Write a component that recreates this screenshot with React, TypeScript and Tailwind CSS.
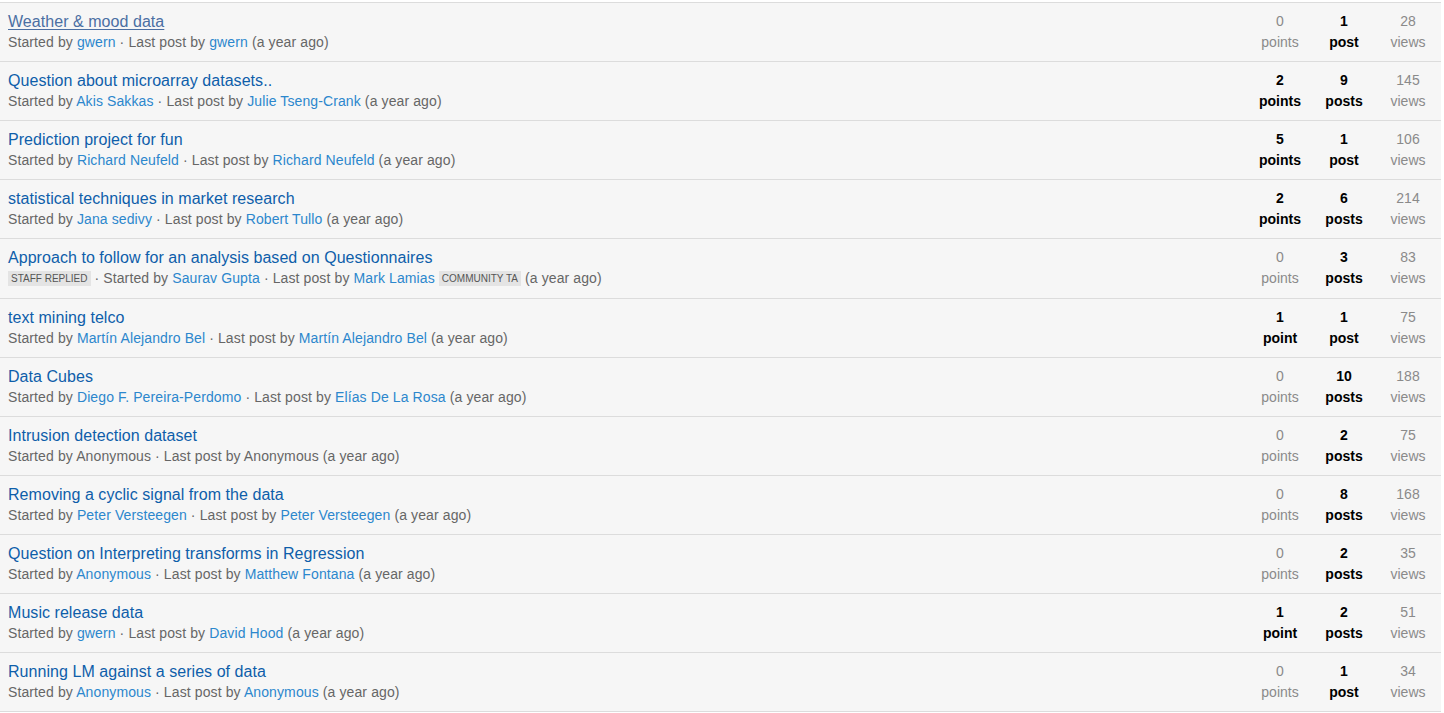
import React from "react";

type Part = { t: string; link?: boolean; badge?: boolean };
type Row = {
  title: string;
  visited?: boolean;
  meta: Part[];
  points: number;
  posts: number;
  views: number;
  tall?: boolean;
};

const P = (t: string): Part => ({ t });
const L = (t: string): Part => ({ t, link: true });
const B = (t: string): Part => ({ t, badge: true });

const rows: Row[] = [
  { title: "Weather & mood data", visited: true, meta: [P("Started by "), L("gwern"), P(" · Last post by "), L("gwern"), P(" (a year ago)")], points: 0, posts: 1, views: 28 },
  { title: "Question about microarray datasets..", meta: [P("Started by "), L("Akis Sakkas"), P(" · Last post by "), L("Julie Tseng-Crank"), P(" (a year ago)")], points: 2, posts: 9, views: 145 },
  { title: "Prediction project for fun", meta: [P("Started by "), L("Richard Neufeld"), P(" · Last post by "), L("Richard Neufeld"), P(" (a year ago)")], points: 5, posts: 1, views: 106 },
  { title: "statistical techniques in market research", meta: [P("Started by "), L("Jana sedivy"), P(" · Last post by "), L("Robert Tullo"), P(" (a year ago)")], points: 2, posts: 6, views: 214 },
  { title: "Approach to follow for an analysis based on Questionnaires", tall: true, meta: [B("Staff replied"), P(" · Started by "), L("Saurav Gupta"), P(" · Last post by "), L("Mark Lamias"), P(" "), B("Community TA"), P(" (a year ago)")], points: 0, posts: 3, views: 83 },
  { title: "text mining telco", meta: [P("Started by "), L("Martín Alejandro Bel"), P(" · Last post by "), L("Martín Alejandro Bel"), P(" (a year ago)")], points: 1, posts: 1, views: 75 },
  { title: "Data Cubes", meta: [P("Started by "), L("Diego F. Pereira-Perdomo"), P(" · Last post by "), L("Elías De La Rosa"), P(" (a year ago)")], points: 0, posts: 10, views: 188 },
  { title: "Intrusion detection dataset", meta: [P("Started by Anonymous · Last post by Anonymous (a year ago)")], points: 0, posts: 2, views: 75 },
  { title: "Removing a cyclic signal from the data", meta: [P("Started by "), L("Peter Versteegen"), P(" · Last post by "), L("Peter Versteegen"), P(" (a year ago)")], points: 0, posts: 8, views: 168 },
  { title: "Question on Interpreting transforms in Regression", meta: [P("Started by "), L("Anonymous"), P(" · Last post by "), L("Matthew Fontana"), P(" (a year ago)")], points: 0, posts: 2, views: 35 },
  { title: "Music release data", meta: [P("Started by "), L("gwern"), P(" · Last post by "), L("David Hood"), P(" (a year ago)")], points: 1, posts: 2, views: 51 },
  { title: "Running LM against a series of data", meta: [P("Started by "), L("Anonymous"), P(" · Last post by "), L("Anonymous"), P(" (a year ago)")], points: 0, posts: 1, views: 34 },
];

function Stat({ n, label, strong }: { n: number; label: string; strong: boolean }) {
  return (
    <div
      className={
        "w-[64px] flex flex-col items-center text-[14px] " +
        (strong ? "font-bold text-black" : "text-[#8a8a8a]")
      }
    >
      <span className="leading-[21px]">{n}</span>
      <span className="leading-[21px]">{label}</span>
    </div>
  );
}

export default function App() {
  return (
    <div
      className="w-[1444px] min-h-[713px] bg-white pt-[2px]"
      style={{ fontFamily: '"Liberation Sans", Arial, Helvetica, sans-serif' }}
    >
      <div className="w-[1441px] bg-[#f6f6f6] border-t border-[#dcdcdc]">
        {rows.map((r, i) => (
          <div
            key={i}
            className={
              "flex items-start border-b border-[#dcdcdc] " + (r.tall ? "h-[60px]" : "h-[59px]")
            }
          >
            <div className="flex-1 pl-[8px] pt-[8px]">
              <div
                className={
                  "text-[16px] leading-[21px] tracking-[0.05px] " +
                  (r.visited ? "text-[#4b6fa3] underline underline-offset-2" : "text-[#0e5eaa]")
                }
              >
                {r.title}
              </div>
              <div className="text-[14px] leading-[20px] tracking-[0.11px] text-[#666666] whitespace-nowrap">
                {r.meta.map((p, j) =>
                  p.badge ? (
                    <span
                      key={j}
                      className="inline-block bg-[#e4e4e4] text-[#555555] text-[10px] tracking-normal uppercase leading-[15px] px-[3px] align-[1px]"
                    >
                      {p.t}
                    </span>
                  ) : p.link ? (
                    <span key={j} className="text-[#2c87cd]">
                      {p.t}
                    </span>
                  ) : (
                    <span key={j}>{p.t}</span>
                  )
                )}
              </div>
            </div>
            <div className="flex pt-[8px] mr-[1px]">
              <Stat n={r.points} label={r.points === 1 ? "point" : "points"} strong={r.points > 0} />
              <Stat n={r.posts} label={r.posts === 1 ? "post" : "posts"} strong={true} />
              <Stat n={r.views} label="views" strong={false} />
            </div>
          </div>
        ))}
      </div>
    </div>
  );
}
